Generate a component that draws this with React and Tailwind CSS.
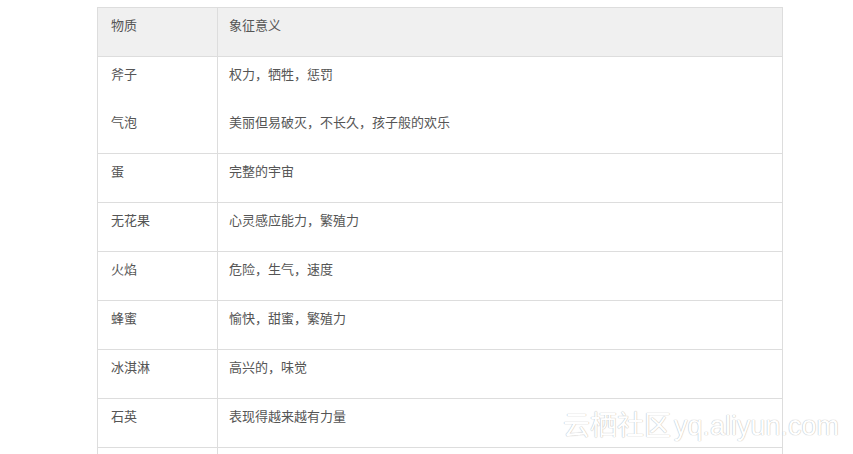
const rows = [
  { items: [["斧子", "权力，牺牲，惩罚"], ["气泡", "美丽但易破灭，不长久，孩子般的欢乐"]] },
  { items: [["蛋", "完整的宇宙"]] },
  { items: [["无花果", "心灵感应能力，繁殖力"]] },
  { items: [["火焰", "危险，生气，速度"]] },
  { items: [["蜂蜜", "愉快，甜蜜，繁殖力"]] },
  { items: [["冰淇淋", "高兴的，味觉"]] },
  { items: [["石英", "表现得越来越有力量"]] },
  { items: [["", ""]] },
];

export default function App() {
  return (
    <div
      className="relative w-[853px] h-[454px] overflow-hidden bg-white text-[13px] text-[#555]"
      style={{ fontFamily: '"Microsoft YaHei", "Noto Sans CJK SC", sans-serif' }}
    >
      <div className="ml-[97px] mt-[7px] w-[686px] border border-[#ddd]">
        <div className="flex h-[49px] bg-[#f0f0f0] border-b border-[#ddd]">
          <div className="w-[120px] border-r border-[#ddd] pl-[13px] pt-[7px] leading-5">物质</div>
          <div className="flex-1 pl-[11px] pt-[7px] leading-5">象征意义</div>
        </div>
        {rows.map((row, i) => (
          <div key={i} className="flex border-b border-[#ddd]">
            <div className="w-[120px] border-r border-[#ddd] pl-[13px]">
              {row.items.map(([a], j) => (
                <div key={j} className="h-[48px] pt-[7px] leading-5">{a}</div>
              ))}
            </div>
            <div className="flex-1 pl-[11px]">
              {row.items.map(([, b], j) => (
                <div key={j} className="h-[48px] pt-[7px] leading-5">{b}</div>
              ))}
            </div>
          </div>
        ))}
      </div>

      <div className="absolute left-[563px] top-[406px] flex items-baseline whitespace-nowrap leading-[36px] text-white [text-shadow:0_0_1px_#b8b8b8,0_0_1px_#c8c8c8]">
        <span
          className="text-[27px]"
          style={{ fontFamily: '"Noto Sans CJK SC", sans-serif' }}
        >
          云栖社区
        </span>
        <span
          className="ml-[3px] text-[27px]"
          style={{ fontFamily: '"Liberation Sans", Arial, sans-serif' }}
        >
          yq.aliyun.com
        </span>
      </div>
    </div>
  );
}
